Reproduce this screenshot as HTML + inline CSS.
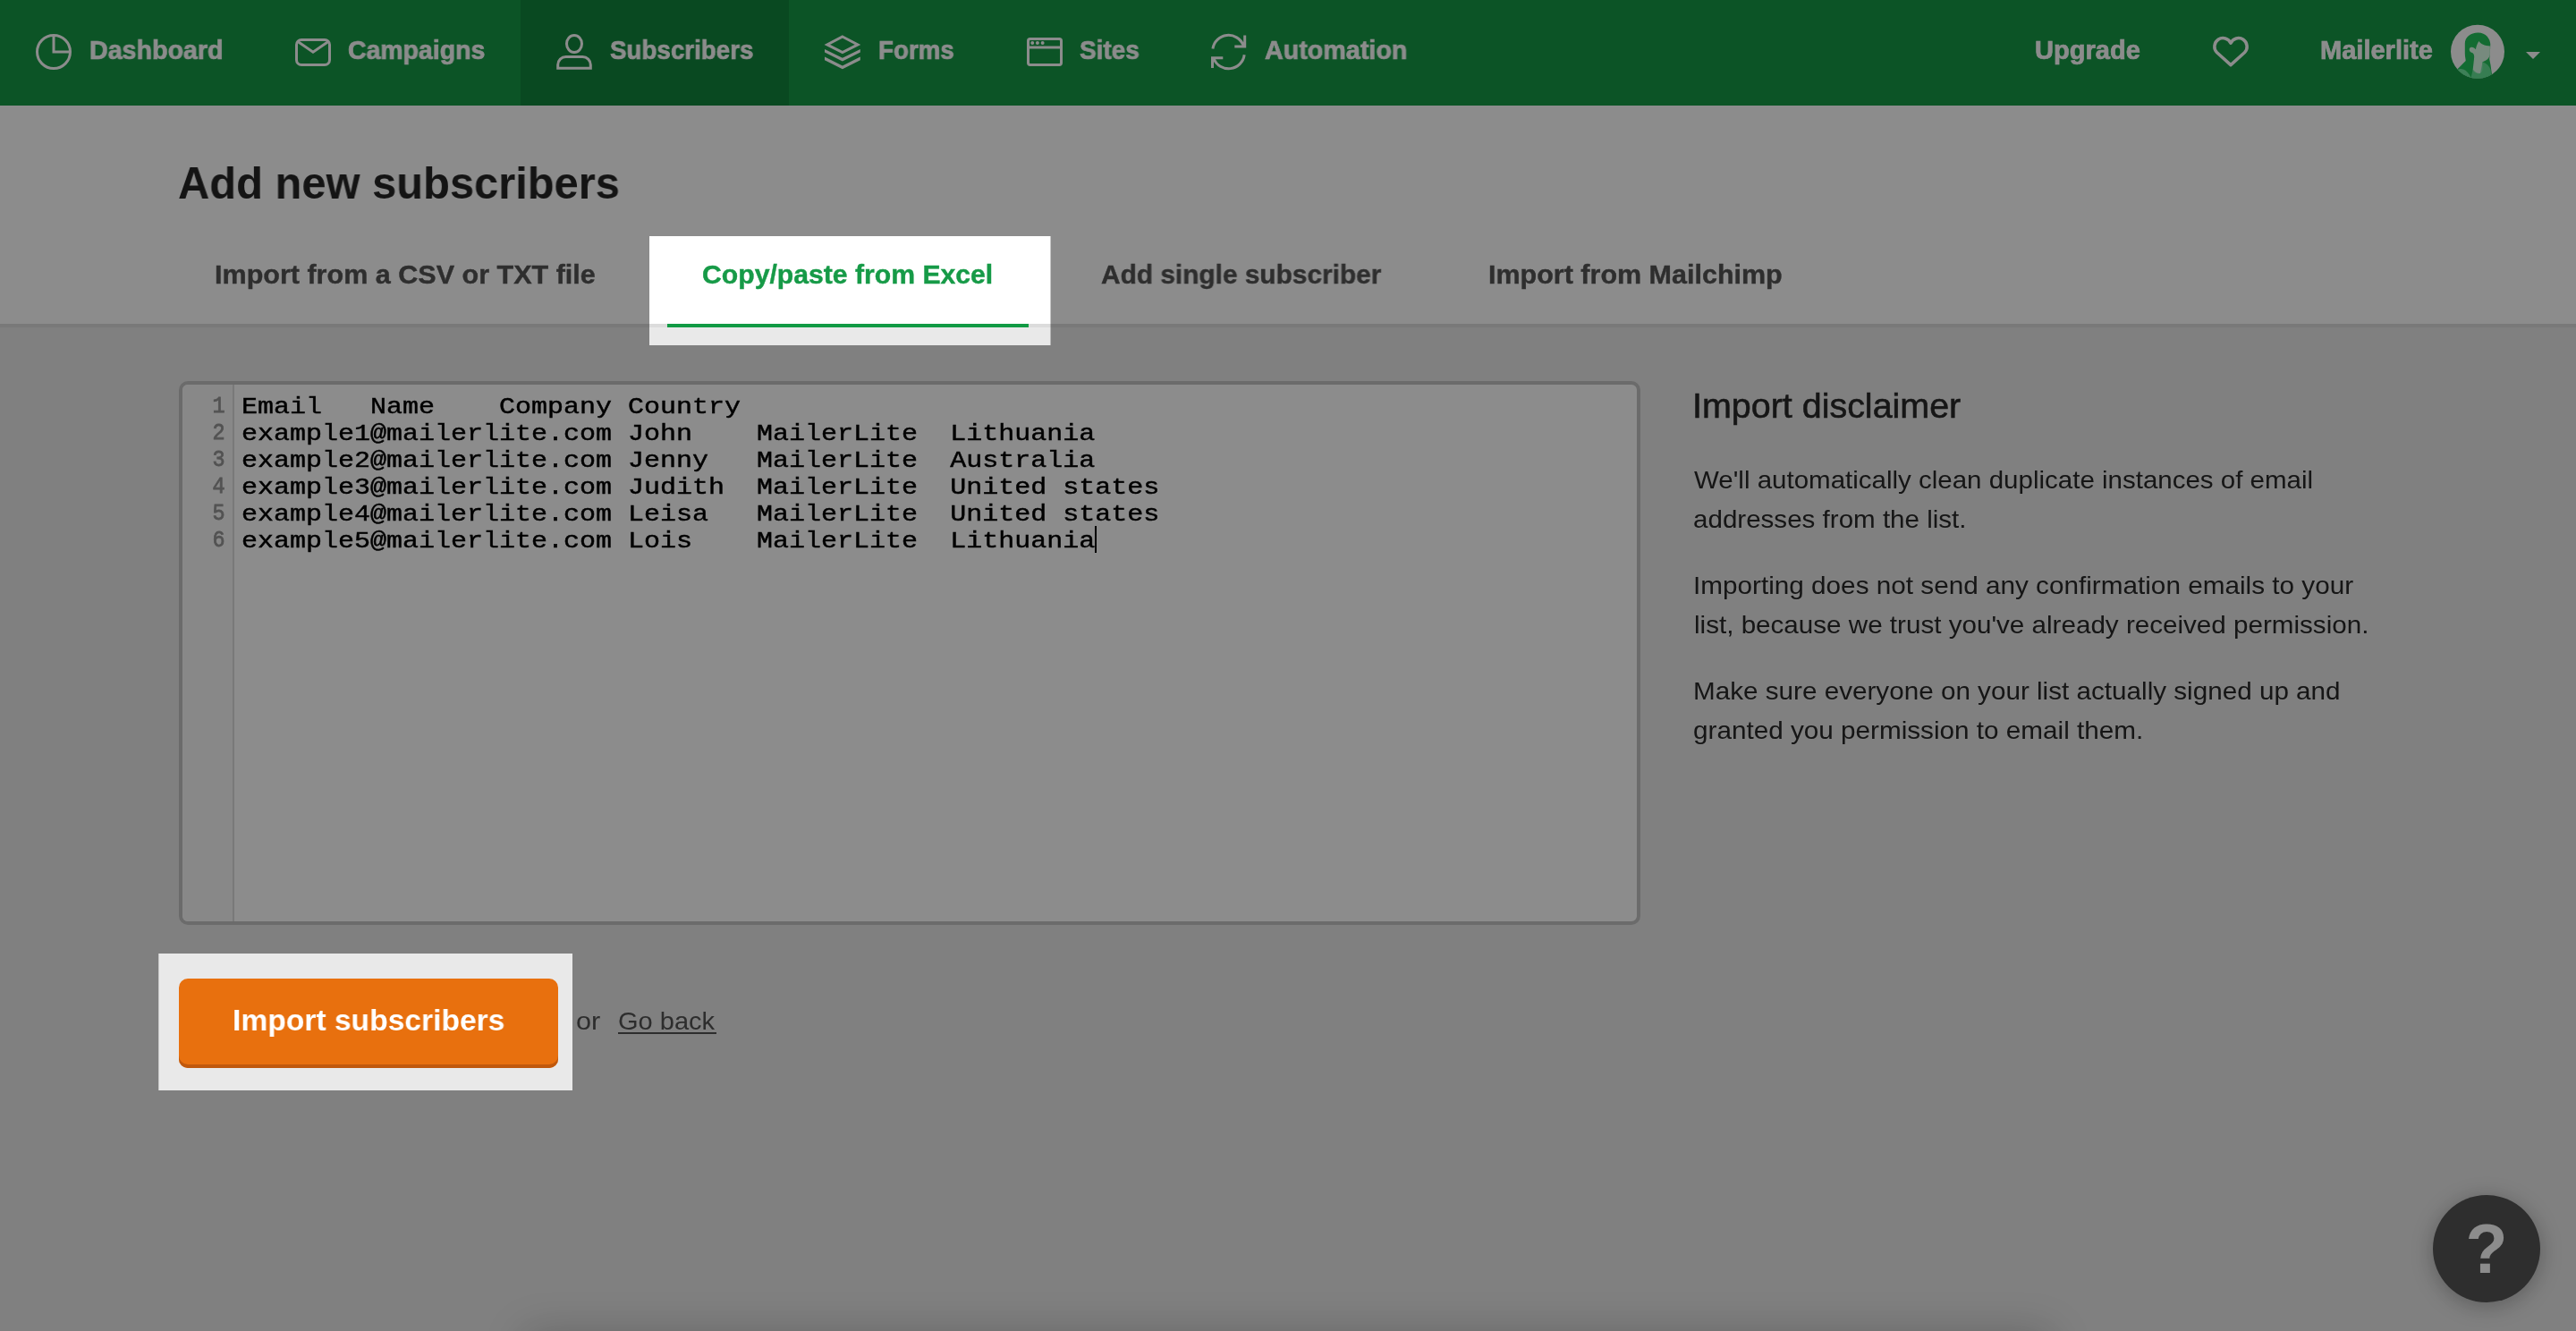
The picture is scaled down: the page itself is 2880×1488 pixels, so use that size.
<!DOCTYPE html>
<html lang="en"><head><meta charset="utf-8"><title>Add new subscribers</title>
<style>
html,body{margin:0;padding:0;width:2880px;height:1488px;overflow:hidden;}
#page{position:absolute;left:0;top:0;width:2880px;height:1488px;overflow:hidden;background:#e9e9e9;}
body{width:2880px;height:1488px;overflow:hidden;position:relative;background:#e9e9e9;font-family:"Liberation Sans", sans-serif;}
.abs{position:absolute;}
.tx{position:absolute;white-space:pre;line-height:1;transform-origin:0 0;will-change:transform;}
#nav{position:absolute;left:0;top:0;width:2880px;height:118px;background:#179a46;}
#navact{position:absolute;left:582px;top:0;width:300px;height:118px;background:#12863c;}
#top{position:absolute;left:0;top:118px;width:2880px;height:244px;background:#ffffff;}
#topline{position:absolute;left:0;top:362px;width:2880px;height:4px;background:#dcdcdc;}
#tabul{position:absolute;left:746px;top:362px;width:404px;height:4px;background:#119a44;}
#ed{will-change:transform;position:absolute;left:200px;top:426px;width:1634px;height:608px;box-sizing:border-box;border:4px solid #c4c4c4;border-radius:10px;background:#fff;overflow:hidden;}
#gut{position:absolute;left:0;top:0;width:56px;height:600px;background:#f7f7f7;border-right:2px solid #ddd;}
.cl{position:absolute;left:66px;white-space:pre;line-height:30px;height:30px;font-family:"Liberation Mono", monospace;font-size:30px;letter-spacing:0.000px;color:#000;font-weight:400;transform:scaleY(0.885);transform-origin:0 24px;-webkit-text-stroke:0.5px #000;}
.ln{position:absolute;left:0;width:47.5px;text-align:right;line-height:30px;height:30px;font-family:"Liberation Mono", monospace;font-size:26px;color:#969696;-webkit-text-stroke:0.8px #969696;transform:scaleX(.9);transform-origin:100% 0;}
#cursor{position:absolute;left:1224px;top:588px;width:2px;height:30px;background:#000;}
#btn{position:absolute;left:200px;top:1094px;width:424px;height:100px;box-sizing:border-box;border-radius:10px;background:#e8700e;box-shadow:inset 0 -4px 0 #c0580c;}
#ul{position:absolute;left:691px;top:1154px;width:110px;height:2px;background:#535353;}
#help{position:absolute;left:2720px;top:1336px;width:120px;height:120px;border-radius:60px;background:#545454;box-shadow:0 4px 24px rgba(0,0,0,.28);}
#q{will-change:transform;position:absolute;left:2720px;top:1336px;width:120px;height:120px;line-height:120px;text-align:center;font-weight:700;font-size:77px;color:#fff;}
#botsh{position:absolute;left:590px;top:1494px;width:1700px;height:40px;background:#000;box-shadow:0 0 48px 4px rgba(0,0,0,.2);}
#ov{position:absolute;left:0;top:0;}
</style></head>
<body>
<div id="page">
<div id="nav"></div><div id="navact"></div>
<div id="top"></div><div id="topline"></div><div id="tabul"></div>

<svg class="abs" style="left:0;top:0" width="2880" height="118" viewBox="0 0 2880 118" fill="none" stroke="#fff" stroke-width="3">

<!-- dashboard -->
<circle cx="60" cy="58" r="18.5"/><path d="M60 39.5V58H78.5"/>
<!-- campaigns -->
<rect x="331.5" y="44.5" width="37" height="28" rx="5.5"/><path d="M333 46.6L350 58.3L367 46.6"/>
<!-- subscribers -->
<ellipse cx="642" cy="49" rx="8.5" ry="9.4"/><path d="M623.7 76.3V72.5a9 9 0 0 1 9-9h18.6a9 9 0 0 1 9 9V76.3Z"/>
<!-- forms -->
<path d="M941.9 41L959 49.9L941.9 58.6L924.8 49.9Z" stroke-linejoin="miter"/>
<path d="M922 54.9L941.9 64.8L961.8 54.9V58.5L941.9 68.4L922 58.5ZM922 63.6L941.9 73.6L961.8 63.6V67.2L941.9 77.2L922 67.2Z" fill="#fff" stroke="none"/>
<!-- sites -->
<rect x="1149.5" y="43.5" width="37" height="29" rx="2.2"/><path d="M1149.5 53H1186.5"/>
<g fill="#fff" stroke="none"><circle cx="1154.2" cy="48" r="2"/><circle cx="1159.9" cy="48" r="2"/><circle cx="1165.6" cy="48" r="2"/></g>
<!-- automation -->
<path d="M1355.9 54.5A17.8 17.8 0 0 1 1390 50.5M1391.7 39.5V52H1380.3"/>
<path d="M1391.2 61.3A17.8 17.8 0 0 1 1357 65.5M1355.5 76V64.7H1367.3"/>
<!-- heart -->
<path d="M2494 72.6L2478.6 58.8A9.5 9.5 0 1 1 2494 48.2A9.5 9.5 0 1 1 2509.4 58.8Z" stroke-width="3.5" stroke-linejoin="round"/>
<!-- caret -->
<path d="M2824 58H2840L2832 66Z" fill="#fff" stroke="none"/>
<!-- avatar -->
<g transform="translate(2740 27.8)" stroke="none">
<clipPath id="avc"><circle cx="30" cy="30" r="30"/></clipPath>
<circle cx="30" cy="30" r="30" fill="#fff"/>
<g clip-path="url(#avc)">
<path d="M30.5 8.6C22 8.6 15.8 13.5 15.8 21V32C15.8 36 16.7 38 16.7 40.2L6 51V62H47L45.8 54.3L44.5 44.7L43.2 38.3L43.9 31.9L44.2 23C45 17 40 8.6 30.5 8.6Z" fill="#24c45b"/>
<path d="M31.4 18.2C33 21 38 23.6 43.9 23.6V33C43.5 37 40 40 35.6 41.5V49C35.6 53 33 55 30.5 54.6C27 54.2 24.7 52.5 24.7 50L26 38.3C26.5 35 26 32.5 24.5 31.5C21 31 19.5 27 22 25.3C24 24.2 26.5 25.5 27.9 27.5C28.5 24 29.5 21 31.4 18.2Z" fill="#d9fbe6"/>
<path d="M6 51C12 47 17 50 21 56L24 62H6Z" fill="#71e9a0"/>
<path d="M22 62L24.7 49.8C27 53 30 54.5 33 54.3L35.6 41.5C40 43 43 46 44.5 50L46 62Z" fill="#71e9a0" opacity=".85"/>
</g></g>

</svg>

<div id="ed"><div id="gut"></div>
<div class="ln" style="top:9px">1</div>
<div class="ln" style="top:39px">2</div>
<div class="ln" style="top:69px">3</div>
<div class="ln" style="top:99px">4</div>
<div class="ln" style="top:129px">5</div>
<div class="ln" style="top:159px">6</div>
<div class="cl" style="top:9px">Email   Name    Company Country</div>
<div class="cl" style="top:39px">example1@mailerlite.com John    MailerLite  Lithuania</div>
<div class="cl" style="top:69px">example2@mailerlite.com Jenny   MailerLite  Australia</div>
<div class="cl" style="top:99px">example3@mailerlite.com Judith  MailerLite  United states</div>
<div class="cl" style="top:129px">example4@mailerlite.com Leisa   MailerLite  United states</div>
<div class="cl" style="top:159px">example5@mailerlite.com Lois    MailerLite  Lithuania</div>
</div>
<div id="cursor"></div>

<div id="btn"></div><div id="ul"></div>
<div id="botsh"></div>
<div id="help"></div><div id="q">?</div>

<span class="tx" style="left:100.21px;top:41.50px;font-size:29px;font-weight:700;color:#ffffff;transform:scaleX(0.9868);-webkit-text-stroke:0.7px #fff;">Dashboard</span>
<span class="tx" style="left:388.82px;top:41.50px;font-size:29px;font-weight:700;color:#ffffff;transform:scaleX(0.9806);-webkit-text-stroke:0.7px #fff;">Campaigns</span>
<span class="tx" style="left:682.30px;top:41.50px;font-size:29px;font-weight:700;color:#ffffff;transform:scaleX(0.9568);-webkit-text-stroke:0.7px #fff;">Subscribers</span>
<span class="tx" style="left:982.34px;top:41.50px;font-size:29px;font-weight:700;color:#ffffff;transform:scaleX(0.9561);-webkit-text-stroke:0.7px #fff;">Forms</span>
<span class="tx" style="left:1207.30px;top:41.50px;font-size:29px;font-weight:700;color:#ffffff;transform:scaleX(0.9635);-webkit-text-stroke:0.7px #fff;">Sites</span>
<span class="tx" style="left:1414.00px;top:41.50px;font-size:29px;font-weight:700;color:#ffffff;transform:scaleX(0.9895);-webkit-text-stroke:0.7px #fff;">Automation</span>
<span class="tx" style="left:2275.30px;top:41.50px;font-size:29px;font-weight:700;color:#ffffff;transform:scaleX(1.0017);-webkit-text-stroke:0.7px #fff;">Upgrade</span>
<span class="tx" style="left:2594.00px;top:41.50px;font-size:29px;font-weight:700;color:#ffffff;transform:scaleX(1.0009);-webkit-text-stroke:0.7px #fff;">Mailerlite</span>
<span class="tx" style="left:198.61px;top:179.75px;font-size:49.5px;font-weight:700;color:#262626;transform:scaleX(0.9867);">Add new subscribers</span>
<span class="tx" style="left:239.96px;top:292.30px;font-size:30px;font-weight:700;color:#555555;transform:scaleX(1.0176);-webkit-text-stroke:0.4px #555;">Import from a CSV or TXT file</span>
<span class="tx" style="left:785.19px;top:292.30px;font-size:30px;font-weight:700;color:#169a47;transform:scaleX(1.0056);-webkit-text-stroke:0.4px #169a47;">Copy/paste from Excel</span>
<span class="tx" style="left:1230.50px;top:292.30px;font-size:30px;font-weight:700;color:#555555;transform:scaleX(0.9943);-webkit-text-stroke:0.4px #555;">Add single subscriber</span>
<span class="tx" style="left:1663.97px;top:292.30px;font-size:30px;font-weight:700;color:#555555;transform:scaleX(1.0167);-webkit-text-stroke:0.4px #555;">Import from Mailchimp</span>
<span class="tx" style="left:1892.49px;top:434.50px;font-size:38px;font-weight:400;color:#282828;transform:scaleX(1.0379);-webkit-text-stroke:0.55px #282828;">Import disclaimer</span>
<span class="tx" style="left:1893.80px;top:522.50px;font-size:28px;font-weight:400;color:#292929;transform:scaleX(1.0535);">We&#x27;ll automatically clean duplicate instances of email</span>
<span class="tx" style="left:1893.34px;top:566.50px;font-size:28px;font-weight:400;color:#292929;transform:scaleX(1.0556);">addresses from the list.</span>
<span class="tx" style="left:1892.88px;top:640.50px;font-size:28px;font-weight:400;color:#292929;transform:scaleX(1.0609);">Importing does not send any confirmation emails to your</span>
<span class="tx" style="left:1893.94px;top:684.50px;font-size:28px;font-weight:400;color:#292929;transform:scaleX(1.0574);">list, because we trust you&#x27;ve already received permission.</span>
<span class="tx" style="left:1892.88px;top:758.50px;font-size:28px;font-weight:400;color:#292929;transform:scaleX(1.0590);">Make sure everyone on your list actually signed up and</span>
<span class="tx" style="left:1893.44px;top:802.50px;font-size:28px;font-weight:400;color:#292929;transform:scaleX(1.0602);">granted you permission to email them.</span>
<span class="tx" style="left:259.72px;top:1123.00px;font-size:34px;font-weight:700;color:#ffffff;transform:scaleX(0.9883);">Import subscribers</span>
<span class="tx" style="left:644.11px;top:1128.20px;font-size:28px;font-weight:400;color:#535353;transform:scaleX(1.0945);">or</span>
<span class="tx" style="left:691.16px;top:1128.20px;font-size:28px;font-weight:400;color:#535353;transform:scaleX(1.0367);">Go back</span>

<svg id="ov" width="2880" height="1488" viewBox="0 0 2880 1488"><path fill="rgba(0,0,0,0.45)" fill-rule="evenodd" d="M0 0H2880V1488H0Z M726 264H1174.5V386H726Z M177.3 1066H640V1219H177.3Z"/></svg>
</div>
</body></html>
